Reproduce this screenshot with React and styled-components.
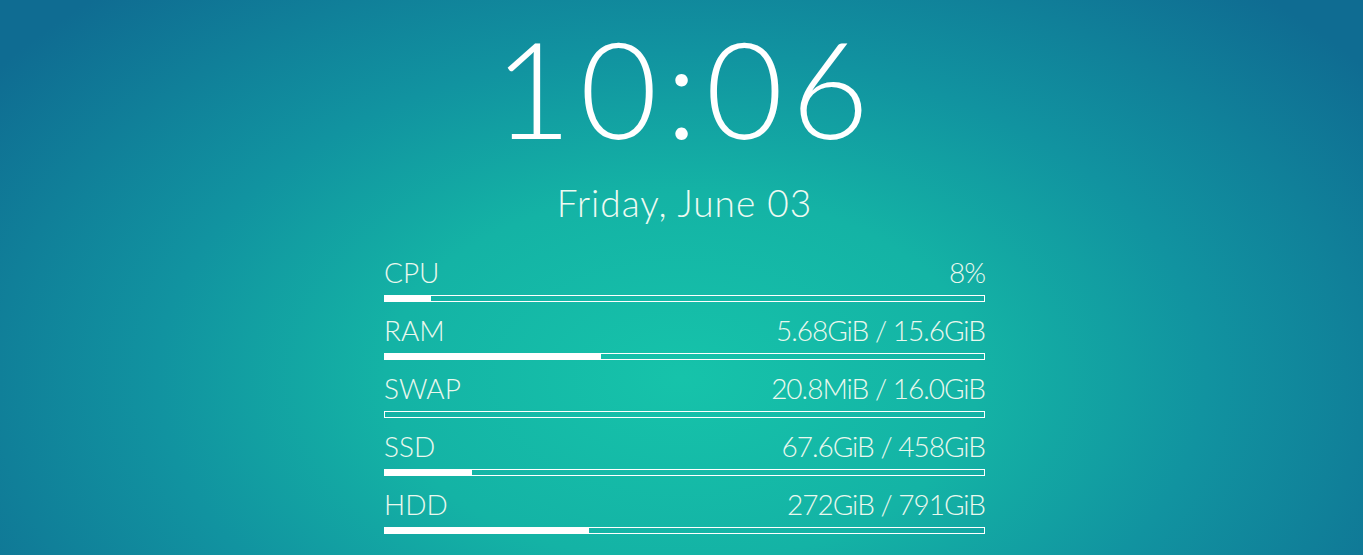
import React from 'react'
import styled, { createGlobalStyle } from 'styled-components'

const GlobalStyle = createGlobalStyle`
  html, body {
    margin: 0;
    padding: 0;
    height: 100%;
  }
  body {
    font-family: "Lato", "Noto Sans", sans-serif;
    overflow: hidden;
  }
`;

const Screen = styled.div`
  width: 100vw;
  height: 100vh;
  display: flex;
  flex-direction: column;
  align-items: center;
  background: radial-gradient(ellipse 62% 95% at 50% 68%, #16c3aa 0%, #14b3a5 35%, #1193a0 62%, #0f6c92 100%);
  color: #fff;
`;

const Clock = styled.div`
  margin-top: 8px;
  font-size: 134px;
  font-weight: 300;
  line-height: 1.2;
  letter-spacing: 8px;
  padding-left: 8px;
`;

const DateLine = styled.div`
  margin-top: 12px;
  padding-left: 6px;
  font-size: 37px;
  font-weight: 300;
  line-height: 1.2;
  letter-spacing: 1px;
  color: #eefaf2;
`;

const Stats = styled.div`
  width: 601px;
  margin: 30px 0 0 6px;
  display: flex;
  flex-direction: column;
  gap: 11px;
`;

const Row = styled.div`
  display: flex;
  flex-direction: column;
  gap: 6px;
`;

const Header = styled.div`
  display: flex;
  justify-content: space-between;
  align-items: baseline;
  font-size: 28px;
  font-weight: 300;
  line-height: 34px;
  color: #eaf8ee;
`;

const Value = styled.span`
  letter-spacing: -1px;
`;

const Bar = styled.div`
  height: 7px;
  box-sizing: border-box;
  border: 1px solid #fff;
`;

const Fill = styled.div`
  height: 7px;
  margin: -1px 0 0 -1px;
  background: #fff;
`;

const stats = [
  { label: 'CPU', value: '8%', pct: 7.8 },
  { label: 'RAM', value: '5.68GiB / 15.6GiB', pct: 36.2 },
  { label: 'SWAP', value: '20.8MiB / 16.0GiB', pct: 0 },
  { label: 'SSD', value: '67.6GiB / 458GiB', pct: 14.7 },
  { label: 'HDD', value: '272GiB / 791GiB', pct: 34.3 },
];

export default function App() {
  return (
    <>
      <GlobalStyle />
      <Screen>
        <Clock>10:06</Clock>
        <DateLine>Friday, June 03</DateLine>
        <Stats>
          {stats.map((s) => (
            <Row key={s.label}>
              <Header>
                <span>{s.label}</span>
                <Value>{s.value}</Value>
              </Header>
              <Bar>
                <Fill style={{ width: `${s.pct}%` }} />
              </Bar>
            </Row>
          ))}
        </Stats>
      </Screen>
    </>
  )
}
